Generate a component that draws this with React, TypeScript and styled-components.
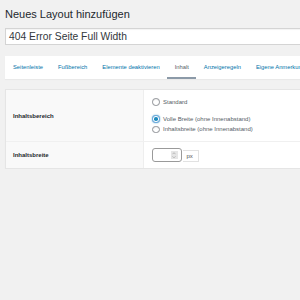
import React from "react";
import styled, { createGlobalStyle } from "styled-components";

const Global = createGlobalStyle`
  html, body { margin: 0; padding: 0; background: #f1f1f1; overflow: hidden; }
  body { font-family: "Liberation Sans", Arial, sans-serif; color: #23282d; }
`;

const Page = styled.div`
  width: 360px;
  padding: 7px 0 0 5px;
  box-sizing: border-box;
`;

const Title = styled.h1`
  margin: 0;
  font-size: 11px;
  line-height: 14px;
  font-weight: 400;
  color: #23282d;
`;

const TitleInput = styled.div`
  margin-top: 7px;
  height: 17px;
  box-sizing: border-box;
  border: 1px solid #d4d4d4;
  background: #fff;
  box-shadow: inset 0 1px 1px rgba(0, 0, 0, 0.05);
  padding: 0 3px;
  font-size: 10.3px;
  line-height: 15px;
  color: #32373c;
`;

const TabBar = styled.div`
  margin-top: 11px;
  height: 23px;
  background: #fff;
  display: flex;
  align-items: stretch;
  padding-left: 0.5px;
  box-sizing: border-box;
  box-shadow: 0 1px 1px rgba(0, 0, 0, 0.03);
`;

const Tab = styled.div<{ $active?: boolean }>`
  padding: 0 7.5px;
  display: flex;
  align-items: center;
  font-size: 5.8px;
  white-space: nowrap;
  color: ${(p) => (p.$active ? "#555d66" : "#0073aa")};
  border-bottom: 2px solid ${(p) => (p.$active ? "#8c9aa8" : "transparent")};
  padding-top: 1px;
  box-sizing: border-box;
`;

const Card = styled.div`
  margin-top: 10px;
  background: #fff;
  border: 1px solid #e5e5e5;
  box-shadow: 0 1px 1px rgba(0, 0, 0, 0.04);
`;

const Row = styled.div<{ $h: number }>`
  display: grid;
  grid-template-columns: 138px 1fr;
  height: ${(p) => p.$h}px;
  & + & {
    border-top: 1px solid #f0f0f0;
  }
`;

const LabelCell = styled.div`
  background: #f9f9f9;
  border-right: 1px solid #eeeeee;
  display: flex;
  align-items: center;
  padding-left: 7px;
  font-size: 6px;
  font-weight: 700;
  color: #23282d;
`;

const FieldCell = styled.div<{ $center?: boolean }>`
  padding-left: 8px;
  display: flex;
  flex-direction: column;
  justify-content: ${(p) => (p.$center ? "center" : "flex-start")};
  padding-top: ${(p) => (p.$center ? 0 : 7)}px;
`;

const RadioRow = styled.label<{ $gap?: number }>`
  display: flex;
  align-items: center;
  height: 10.3px;
  margin-top: ${(p) => p.$gap ?? 0}px;
  font-size: 6px;
  color: #555d66;
  white-space: nowrap;
`;

const RadioCircle = styled.span<{ $checked?: boolean }>`
  width: 7.5px;
  height: 7.5px;
  box-sizing: border-box;
  border-radius: 50%;
  border: 1px solid ${(p) => (p.$checked ? "#5b9dd9" : "#8c8f94")};
  background: #fff;
  margin-right: 3.5px;
  display: flex;
  align-items: center;
  justify-content: center;
  box-shadow: ${(p) =>
    p.$checked ? "0 0 1.5px rgba(30,140,190,0.8)" : "inset 0 1px 1px rgba(0,0,0,0.08)"};
  &::after {
    content: "";
    display: ${(p) => (p.$checked ? "block" : "none")};
    width: 3.5px;
    height: 3.5px;
    border-radius: 50%;
    background: #1e8cbe;
  }
`;

const NumberGroup = styled.div`
  display: flex;
  align-items: flex-end;
`;

const NumberBox = styled.div`
  width: 30px;
  height: 14px;
  box-sizing: border-box;
  border: 1px solid #9a9a9a;
  border-radius: 3px;
  background: #fff;
  display: flex;
  align-items: center;
  justify-content: flex-end;
  padding-right: 3px;
`;

const Spinner = styled.div`
  width: 7.5px;
  height: 8px;
  background: #e6e6e6;
  display: flex;
  flex-direction: column;
  align-items: center;
  justify-content: center;
  gap: 1px;
`;

const Unit = styled.div`
  width: 16px;
  height: 12px;
  box-sizing: border-box;
  border: 1px solid #e2e2e2;
  border-left: none;
  margin-left: 0.5px;
  font-size: 6px;
  line-height: 10px;
  padding-left: 4px;
  color: #555;
  background: #fff;
`;

const tabs = [
  "Seitenleiste",
  "Fußbereich",
  "Elemente deaktivieren",
  "Inhalt",
  "Anzeigeregeln",
  "Eigene Anmerkungen",
];

export default function App() {
  return (
    <>
      <Global />
      <Page>
        <Title>Neues Layout hinzufügen</Title>
        <TitleInput>404 Error Seite Full Width</TitleInput>
        <TabBar>
          {tabs.map((t) => (
            <Tab key={t} $active={t === "Inhalt"}>
              {t}
            </Tab>
          ))}
        </TabBar>
        <Card>
          <Row $h={51}>
            <LabelCell>Inhaltsbereich</LabelCell>
            <FieldCell>
              <RadioRow>
                <RadioCircle />
                Standard
              </RadioRow>
              <RadioRow $gap={6.7}>
                <RadioCircle $checked />
                Volle Breite (ohne Innenabstand)
              </RadioRow>
              <RadioRow>
                <RadioCircle />
                Inhaltsbreite (ohne Innenabstand)
              </RadioRow>
            </FieldCell>
          </Row>
          <Row $h={26}>
            <LabelCell>Inhaltsbreite</LabelCell>
            <FieldCell $center>
              <NumberGroup>
                <NumberBox>
                  <Spinner>
                    <svg width="4" height="2.5" viewBox="0 0 4 2.5">
                      <path d="M0.5 2.2 L2 0.7 L3.5 2.2" fill="none" stroke="#999" strokeWidth="0.6" />
                    </svg>
                    <svg width="4" height="2.5" viewBox="0 0 4 2.5">
                      <path d="M0.5 0.3 L2 1.8 L3.5 0.3" fill="none" stroke="#999" strokeWidth="0.6" />
                    </svg>
                  </Spinner>
                </NumberBox>
                <Unit>px</Unit>
              </NumberGroup>
            </FieldCell>
          </Row>
        </Card>
      </Page>
    </>
  );
}
